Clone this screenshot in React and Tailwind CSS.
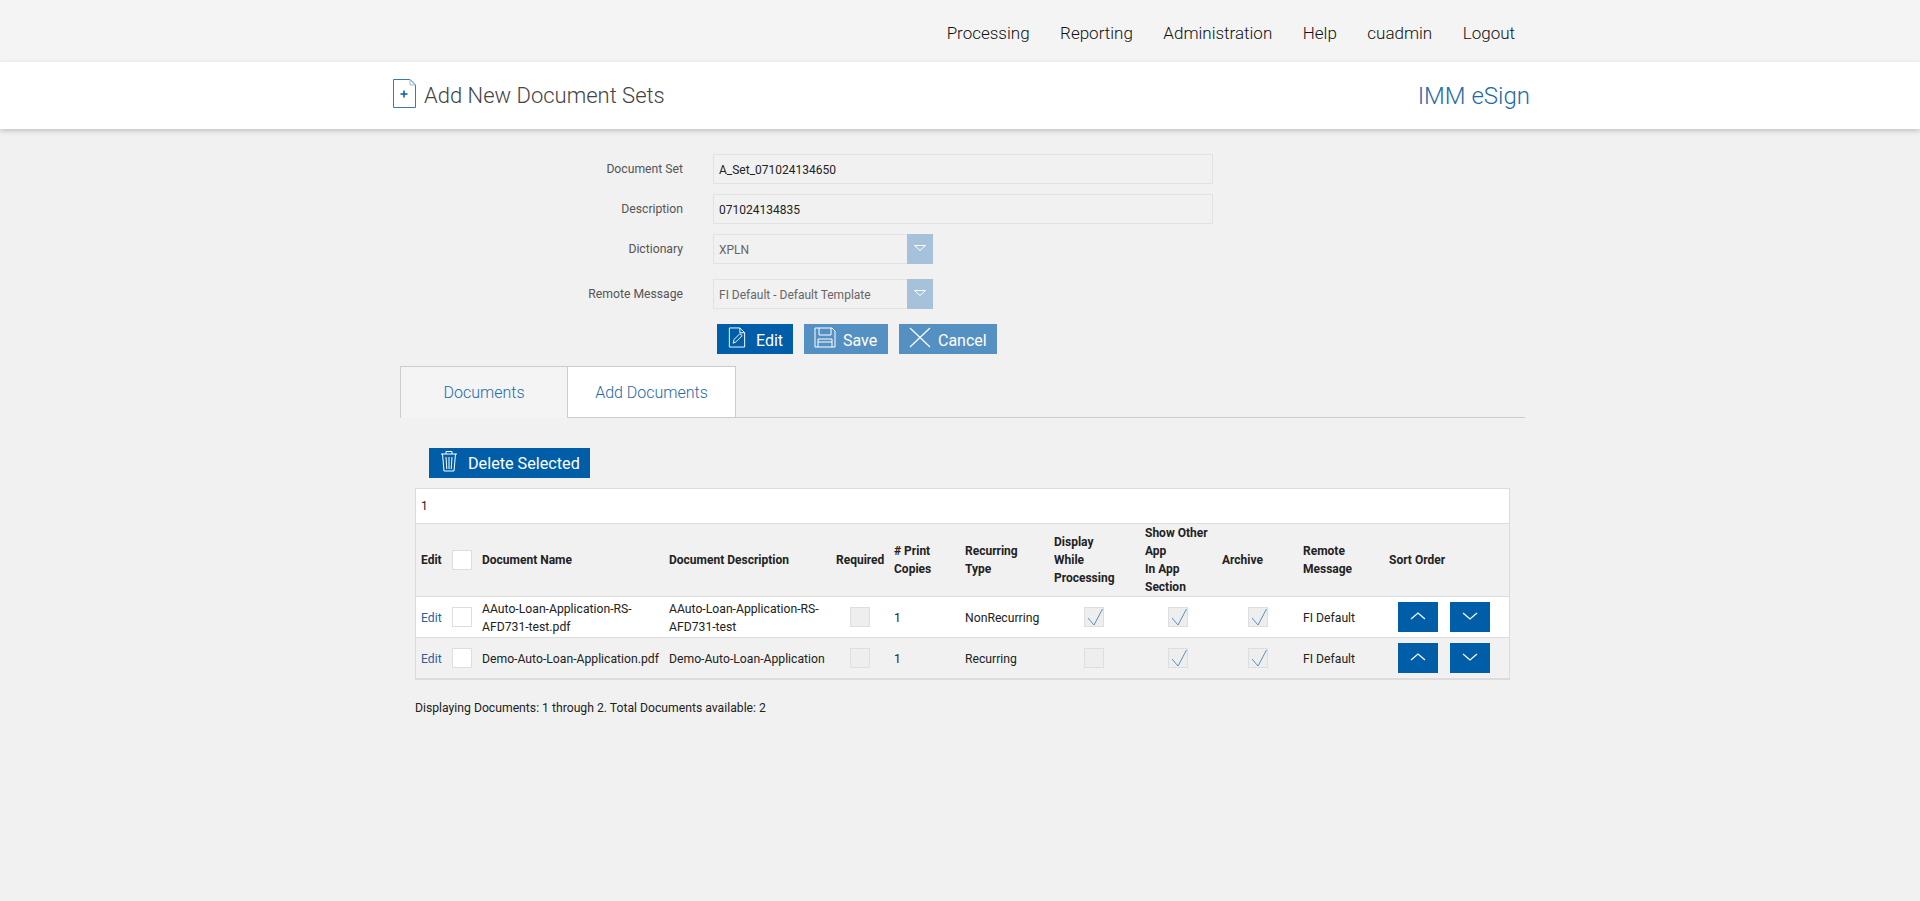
import React from 'react';

const navItems = ['Processing', 'Reporting', 'Administration', 'Help', 'cuadmin', 'Logout'];

const documents = [
  {
    name: 'AAuto-Loan-Application-RS-AFD731-test.pdf',
    description: 'AAuto-Loan-Application-RS-AFD731-test',
    recurring: 'NonRecurring',
    display: true,
    rowClass: 'bg-white',
  },
  {
    name: 'Demo-Auto-Loan-Application.pdf',
    description: 'Demo-Auto-Loan-Application',
    recurring: 'Recurring',
    display: false,
    rowClass: 'bg-[#f1f1f1]',
  },
];

const Check = ({ checked, disabled }) => (
  <span
    className={`relative inline-block h-5 w-5 border border-[#dedede] align-middle ${
      disabled ? 'bg-[#eeeeee]' : 'bg-white'
    }`}
  >
    {checked && (
      <svg className="absolute -left-px -top-px" width="20" height="20" viewBox="0 0 20 20" fill="none">
        <path d="M4 11 L10 18 L18.5 2" stroke="#5b8fc0" strokeWidth="1" />
      </svg>
    )}
  </span>
);

const SelectBox = ({ value, className }) => (
  <div className={`flex h-[30px] w-[220px] border border-[#e2e2e2] bg-[#f1f1f1] ${className}`}>
    <span className="flex-1 pl-[5px] text-[12px] leading-[30px] text-[#666666]">{value}</span>
    <span className="-my-px -mr-px flex w-[26px] items-center justify-center bg-[#a6c2da]">
      <svg className="-mt-[2px]" width="12" height="6" viewBox="0 0 12 6" fill="none">
        <path d="M0.5 0.5 H11.5 L6 5.5 Z" stroke="#ffffff" strokeWidth="1" />
      </svg>
    </span>
  </div>
);

const FormRow = ({ label, children, className = '' }) => (
  <div className={`flex items-center ${className}`}>
    <label className="w-[283px] text-right text-[12.2px] text-[#555555]">{label}</label>
    <div className="ml-[30px]">{children}</div>
  </div>
);

const TextBox = ({ value }) => (
  <div className="h-[30px] w-[500px] border border-[#e2e2e2] bg-[#f1f1f1] pl-[5px] text-[12px] leading-[30px] text-[#222222]">
    {value}
  </div>
);

const SortButton = ({ up }) => (
  <button className="flex h-[30px] w-[40px] items-center justify-center bg-[#005ea8]">
    <svg width="16" height="8" viewBox="0 0 16 8" fill="none" className="-mt-[3px]">
      <path d={up ? 'M1 7 L8 1 L15 7' : 'M1 1 L8 7 L15 1'} stroke="#ffffff" strokeWidth="1.2" />
    </svg>
  </button>
);

const EditIcon = () => (
  <svg className="-mt-[4px]" width="18" height="21" viewBox="0 0 18 22" fill="none" stroke="#ffffff" strokeWidth="1">
    <path d="M1 1 H12 L17 6 V21 H1 Z" />
    <path d="M12 1 V6 H17" />
    <path d="M5 17 L6 13 L12 7 L14.5 9 L8 15.5 Z" />
  </svg>
);

const SaveIcon = () => (
  <svg className="-mt-[4px]" width="22" height="21" viewBox="0 0 22 21" fill="none" stroke="#ffffff" strokeWidth="1">
    <path d="M1 1 H18 L21 4 V20 H1 Z" />
    <path d="M5 1 V8 H17 V1" />
    <path d="M4 20 V12 H18 V20" />
    <path d="M4 15 H18" />
  </svg>
);

const CancelIcon = () => (
  <svg className="-mt-[4px]" width="22" height="21" viewBox="0 0 22 21" fill="none" stroke="#ffffff" strokeWidth="1.2">
    <path d="M1 1 L21 20 M21 1 L1 20" />
  </svg>
);

const TrashIcon = () => (
  <svg className="-mt-[4px]" width="18" height="22" viewBox="0 0 18 22" fill="none" stroke="#ffffff" strokeWidth="1">
    <path d="M1 4 H17" />
    <path d="M6 4 V1.5 H12 V4" />
    <path d="M2.5 4 L4 21 H14 L15.5 4" />
    <path d="M6 7 L6.8 19 M9 7 V19 M12 7 L11.2 19" />
  </svg>
);

const ActionButton = ({ icon, label, className }) => (
  <button className={`flex h-[30px] items-center text-[16px] text-white ${className}`}>
    {icon}
    <span className="pt-[4px]">{label}</span>
  </button>
);

export default function App() {
  return (
    <div className="min-h-[901px] bg-[#f1f1f1] font-['Roboto',sans-serif]">
      {/* Top nav */}
      <nav className="flex h-[62px] items-center justify-end gap-[30.5px] bg-[#f4f4f4] pr-[405px] pt-[5px] text-[17px] font-light text-[#111111]">
        {navItems.map((item) => (
          <a key={item}>{item}</a>
        ))}
      </nav>

      {/* Page title */}
      <header className="relative flex h-[67px] items-center justify-between bg-white pl-[393px] pr-[390px] shadow-[0_2px_5px_rgba(0,0,0,0.2)]">
        <div className="flex items-center gap-[8px]">
          <svg className="-mt-[5px]" width="23" height="29" viewBox="0 0 23 29" fill="none">
            <path d="M0.5 0.5 H17 L22.5 6 V28.5 H0.5 Z" stroke="#3a78ad" />
            <path d="M17 0.5 V6 H22.5" stroke="#9dbbd5" />
            <path d="M7.5 15 H14.5 M11 11.5 V18.5" stroke="#005ea8" strokeWidth="1.5" />
          </svg>
          <h1 className="text-[22px] font-light text-[#444444]">Add New Document Sets</h1>
        </div>
        <span className="text-[24px] font-light text-[#1d6aa8]">IMM eSign</span>
      </header>

      <main className="ml-[400px] w-[1125px]">
        <form className="pt-[25px]">
          <FormRow label="Document Set">
            <TextBox value="A_Set_071024134650" />
          </FormRow>
          <FormRow label="Description" className="mt-[10px]">
            <TextBox value="071024134835" />
          </FormRow>
          <FormRow label="Dictionary" className="mt-[10px]">
            <SelectBox value="XPLN" />
          </FormRow>
          <FormRow label="Remote Message" className="mt-[15px]">
            <SelectBox value="FI Default - Default Template" />
          </FormRow>
          <div className="mt-[15px] ml-[317px] flex gap-[11px]">
            <ActionButton icon={<EditIcon />} label="Edit" className="w-[76px] gap-[10px] bg-[#005ea8] pl-[11px]" />
            <ActionButton icon={<SaveIcon />} label="Save" className="w-[84px] gap-[7px] bg-[#5590c2] pl-[10px]" />
            <ActionButton icon={<CancelIcon />} label="Cancel" className="w-[98px] gap-[7px] bg-[#5590c2] pl-[10px]" />
          </div>
        </form>

        {/* Tabs */}
        <div className="mt-[12px] flex h-[52px] border-b border-[#cccccc] text-[16px] font-light text-[#1d6aa8]">
          <div className="-mb-px flex w-[168px] items-center justify-center border-x border-t border-[#cccccc] bg-[#f4f4f4]">
            Documents
          </div>
          <div className="flex w-[168px] items-center justify-center border-r border-t border-[#cccccc] bg-white pt-px">
            Add Documents
          </div>
        </div>

        <button className="mt-[30px] ml-[29px] flex h-[30px] w-[161px] items-center gap-[10px] bg-[#005ea8] pl-[11px] text-[16.2px] text-white">
          <TrashIcon />
          <span className="pt-[3px]">Delete Selected</span>
        </button>

        {/* Documents table */}
        <div className="mt-[10px] ml-[15px] w-[1095px] border border-[#dcdcdc]">
          <div className="h-[34px] bg-white pl-[5px] text-[12px] leading-[34px] text-[#222222]">1</div>
          <table className="w-[1093px] table-fixed border-collapse text-left text-[12px] leading-[18px] text-[#222222]">
            <colgroup>
              <col className="w-[31px]" />
              <col className="w-[30px]" />
              <col className="w-[190px]" />
              <col className="w-[167px]" />
              <col className="w-[58px]" />
              <col className="w-[71px]" />
              <col className="w-[89px]" />
              <col className="w-[91px]" />
              <col className="w-[79px]" />
              <col className="w-[81px]" />
              <col className="w-[86px]" />
              <col />
            </colgroup>
            <thead>
              <tr className="h-[73px] border-y border-[#dcdcdc] bg-[#f1f1f1] font-bold">
                <th className="pl-[5px]">Edit</th>
                <th className="pl-[5px]"><Check /></th>
                <th className="pl-[5px]">Document Name</th>
                <th className="pl-[2px]">Document Description</th>
                <th className="pl-[2px]">Required</th>
                <th className="pl-[2px]">
                  # Print<br />Copies
                </th>
                <th className="pl-[2px]">
                  Recurring<br />Type
                </th>
                <th className="pl-[2px]">
                  Display<br />While<br />Processing
                </th>
                <th className="pl-[2px]">
                  Show Other<br />App<br />In App<br />Section
                </th>
                <th>Archive</th>
                <th>
                  Remote<br />Message
                </th>
                <th>Sort Order</th>
              </tr>
            </thead>
            <tbody className="text-[12.2px]">
              {documents.map((doc) => (
                <tr key={doc.name} className={`h-[41px] border-b border-[#dcdcdc] ${doc.rowClass}`}>
                  <td className="pl-[5px] pt-[2px] text-[#2f5f9e]">Edit</td>
                  <td className="pl-[5px]"><Check /></td>
                  <td className="pl-[5px] pt-[2px]">{doc.name}</td>
                  <td className="pl-[2px] pt-[2px]">{doc.description}</td>
                  <td className="pl-[16px]"><Check disabled /></td>
                  <td className="pl-[2px] pt-[2px]">1</td>
                  <td className="pl-[2px] pt-[2px]">{doc.recurring}</td>
                  <td className="pl-[32px]"><Check disabled checked={doc.display} /></td>
                  <td className="pl-[25px]"><Check disabled checked /></td>
                  <td className="pl-[26px]"><Check disabled checked /></td>
                  <td className="pt-[2px]">FI Default</td>
                  <td>
                    <div className="flex gap-[12px] pl-[9px]">
                      <SortButton up />
                      <SortButton />
                    </div>
                  </td>
                </tr>
              ))}
            </tbody>
          </table>
        </div>

        <p className="mt-[19px] ml-[15px] text-[12.2px] text-[#222222]">
          Displaying Documents: 1 through 2. Total Documents available: 2
        </p>
      </main>
    </div>
  );
}
